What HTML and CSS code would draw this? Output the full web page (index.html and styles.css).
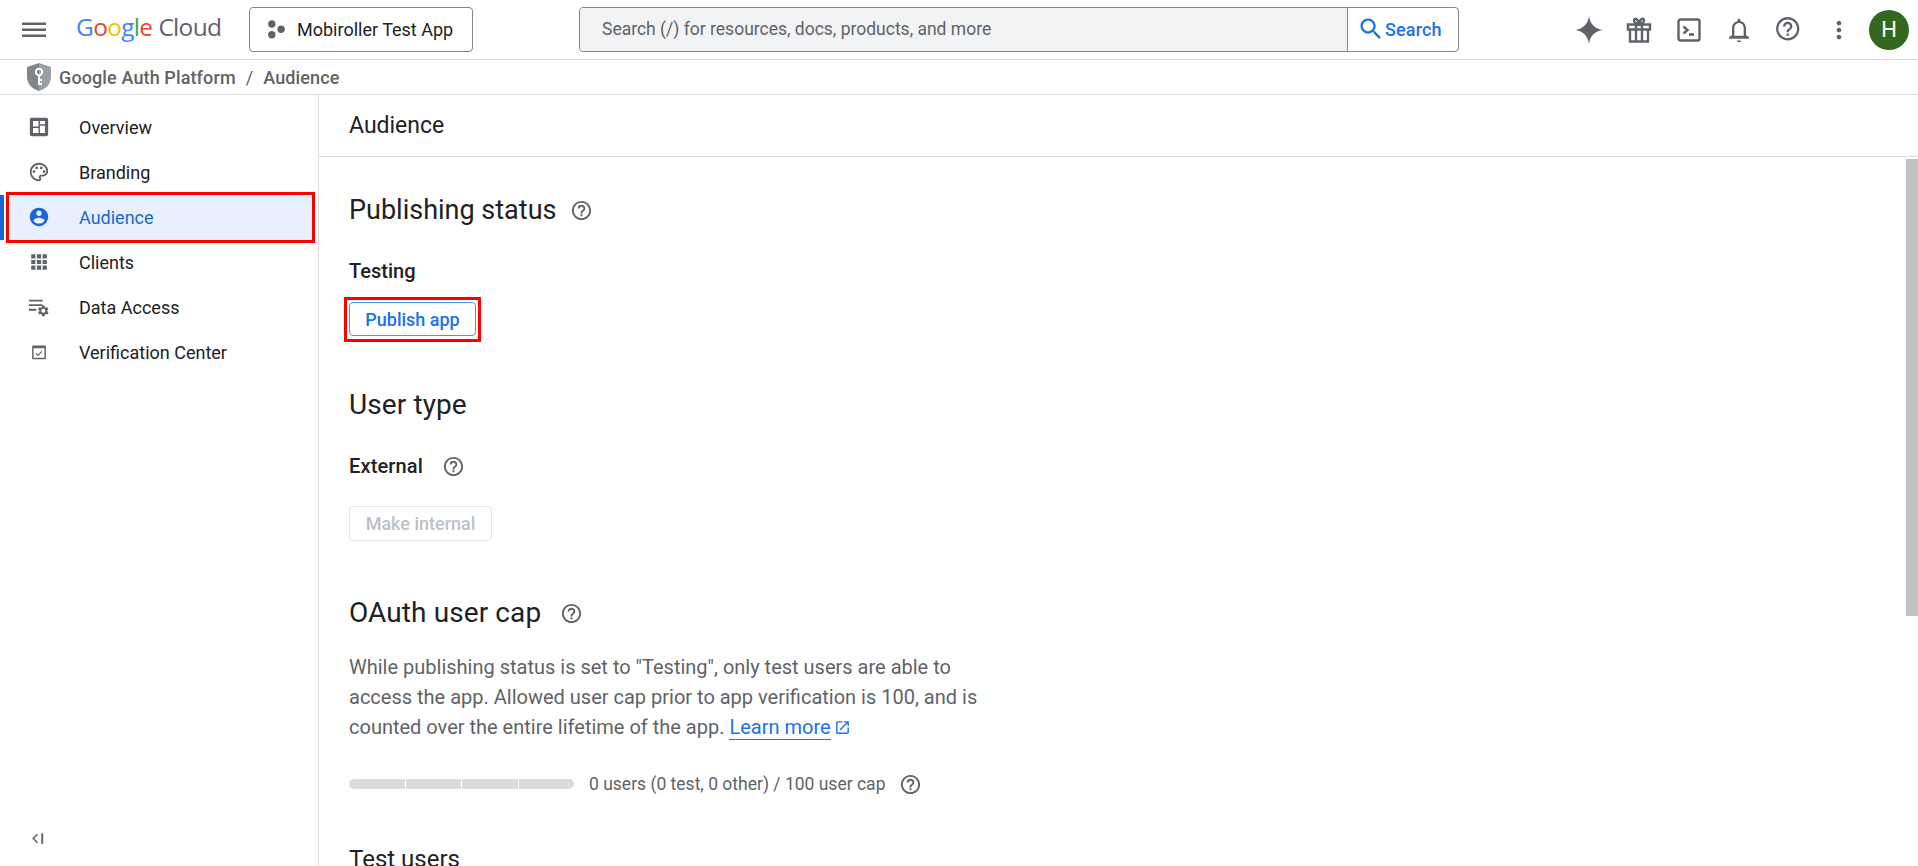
FILE: index.html
```html
<!DOCTYPE html>
<html lang="en">
<head>
<meta charset="utf-8">
<title>Audience</title>
<link rel="stylesheet" href="styles.css">
</head>
<body>
<svg class="defs" width="0" height="0"><defs>
<symbol id="help" viewBox="0 0 24 24"><path d="M11 18h2v-2h-2v2zm1-16C6.48 2 2 6.48 2 12s4.48 10 10 10 10-4.48 10-10S17.52 2 12 2zm0 18c-4.41 0-8-3.59-8-8s3.59-8 8-8 8 3.59 8 8-3.59 8-8 8zm0-14c-2.21 0-4 1.79-4 4h2c0-1.1.9-2 2-2s2 .9 2 2c0 2-3 1.75-3 5h2c0-2.25 3-2.5 3-5 0-2.21-1.79-4-4-4z"/></symbol>
</defs></svg>
<header class="topbar">
  <svg class="menu-icon" viewBox="0 0 24 24"><path d="M0 19h24v-2.4H0V19zm0-6h24v-2.4H0V13zm0-8.4V7h24V4.6H0z"/></svg>
  <div class="logo"><span class="g-blue">G</span><span class="g-red">o</span><span class="g-yellow">o</span><span class="g-blue">g</span><span class="g-green">l</span><span class="g-red">e</span><span class="logo-cloud">Cloud</span></div>
  <button class="project">
    <svg class="project-icon" viewBox="0 0 18 18"><circle cx="5.5" cy="3.8" r="3.5"/><circle cx="14.300" cy="8.800" r="3.500"/><circle cx="5.5" cy="14" r="3.5"/></svg>
    <span>Mobiroller Test App</span>
  </button>
  <div class="search">
    <div class="search-field">Search (/) for resources, docs, products, and more</div>
    <div class="search-btn">
      <svg class="search-icon" viewBox="0 0 24 24"><path d="M15.5 14h-.79l-.28-.27C15.41 12.59 16 11.11 16 9.5 16 5.91 13.09 3 9.5 3S3 5.91 3 9.5 5.91 16 9.5 16c1.61 0 3.09-.59 4.23-1.57l.27.28v.79l5 4.99L20.49 19l-4.99-5zm-6 0C7.01 14 5 11.99 5 9.5S7.01 5 9.5 5 14 7.01 14 9.5 11.99 14 9.5 14z"/></svg>
      <span>Search</span>
    </div>
  </div>
  <div class="actions">
    <svg class="act" viewBox="1 1 26 26"><path d="M14 1c1 7.500 5.500 12 13 13-7.500 1-12 5.500-13 13-1-7.500-5.500-12-13-13 7.500-1 12-5.500 13-13z"/></svg>
    <svg class="act" viewBox="0 0 28 28"><path class="st" d="M3 8.500h22v5H3zM5 13.500v12h18v-12M11 8.500v17M17 8.500v17M14 8.500c-2-1-5-1.500-5-4 0-3 4-2.500 5 4zM14 8.500c2-1 5-1.500 5-4 0-3-4-2.500-5 4z"/></svg>
    <svg class="act" viewBox="0 0 28 28"><rect class="st" x="3.500" y="3.500" width="21" height="21" rx="2"/><path class="st" d="M8.500 10.500l4 3.500-4 3.500M14 18.500h5"/></svg>
    <svg class="act" viewBox="0 0 24 24"><path d="M12 22.500c1.100 0 2-.6 2-1.500h-4c0 .9.900 1.500 2 1.500zM18 16.500v-6c0-3-1.600-5.400-4.800-6.200V3.600c0-.7-.5-1.200-1.200-1.200s-1.200.5-1.200 1.200v.7C7.600 5.100 6 7.500 6 10.500v6L3.500 18v1.500h17V18L18 16.500zM16 17H8v-6.500c0-2.500 1.500-4.500 4-4.500s4 2 4 4.500V17z"/></svg>
    <svg class="act" viewBox="1 1 22 22"><use href="#help"/></svg>
    <svg class="act" viewBox="0 0 24 24"><path d="M12 8c1.100 0 2-.9 2-2s-.9-2-2-2-2 .9-2 2 .9 2 2 2zm0 2c-1.100 0-2 .9-2 2s.9 2 2 2 2-.9 2-2-.9-2-2-2zm0 6c-1.100 0-2 .9-2 2s.9 2 2 2 2-.9 2-2-.9-2-2-2z"/></svg>
    <div class="avatar">H</div>
  </div>
</header>
<div class="crumbs">
  <svg class="shield" viewBox="0 0 24 28"><defs><linearGradient id="sh" x1="0" x2="1" y1="0" y2="0"><stop offset=".5" stop-color="#80868b"/><stop offset=".5" stop-color="#9aa0a6"/></linearGradient></defs><path fill="url(#sh)" d="M12 0l12 4v10c0 7-5 12-12 14C5 26 0 21 0 14V4z"/><circle cx="12" cy="9" r="3.200" fill="none" stroke="#fff" stroke-width="2"/><path d="M12 12v10M12 17h3M12 21h3" stroke="#fff" stroke-width="2" fill="none"/></svg>
  <span class="crumb">Google Auth Platform</span>
  <span class="crumb-sep">/</span>
  <span class="crumb">Audience</span>
</div>
<div class="shell">
  <nav class="sidebar">
    <ul class="nav">
      <li class="nav-item"><a class="nav-link"><svg class="nav-icon" viewBox="0 0 24 24"><path fill-rule="evenodd" d="M4 2h16c1.100 0 2 .9 2 2v16c0 1.100-.9 2-2 2H4c-1.100 0-2-.9-2-2V4c0-1.100.9-2 2-2zM5.500 5.500v6h6v-6h-6zm7.500 0v3.500h5.500V5.500H13zm0 5v8h5.500v-8H13zm-7.500 2.500v5.500h6V13h-6z"/></svg>Overview</a></li>
      <li class="nav-item"><a class="nav-link"><svg class="nav-icon" viewBox="0 0 24 24"><path d="M12 22C6.490 22 2 17.510 2 12S6.490 2 12 2s10 4.040 10 9c0 3.310-2.690 6-6 6h-1.770c-.28 0-.5.220-.5.500 0 .120.050.230.130.330.410.470.640 1.060.640 1.670 0 1.380-1.120 2.500-2.500 2.500zm0-18c-4.410 0-8 3.590-8 8s3.590 8 8 8c.28 0 .5-.220.500-.5 0-.160-.080-.280-.140-.350-.410-.460-.630-1.050-.630-1.650 0-1.380 1.120-2.500 2.500-2.500H16c2.210 0 4-1.790 4-4 0-3.860-3.590-7-8-7z"/><circle cx="6.500" cy="11.500" r="1.500"/><circle cx="9.500" cy="7.500" r="1.500"/><circle cx="14.500" cy="7.500" r="1.500"/><circle cx="17.500" cy="11.500" r="1.500"/></svg>Branding</a></li>
      <li class="nav-item is-active"><a class="nav-link"><svg class="nav-icon" viewBox="0 0 24 24"><path d="M12 2C6.480 2 2 6.480 2 12s4.480 10 10 10 10-4.480 10-10S17.520 2 12 2zm0 3c1.660 0 3 1.340 3 3s-1.340 3-3 3-3-1.340-3-3 1.340-3 3-3zm0 14.200c-2.500 0-4.710-1.280-6-3.220.030-1.990 4-3.080 6-3.080 1.990 0 5.970 1.090 6 3.080-1.290 1.940-3.500 3.220-6 3.220z"/></svg>Audience</a></li>
      <li class="nav-item"><a class="nav-link"><svg class="nav-icon" viewBox="0 0 24 24"><path d="M3.500 3.500h4.600v4.600H3.500zM9.700 3.500h4.600v4.600H9.700zM15.900 3.500h4.600v4.600h-4.600zM3.500 9.700h4.600v4.600H3.500zM9.700 9.700h4.600v4.600H9.700zM15.900 9.700h4.600v4.600h-4.600zM3.500 15.900h4.600v4.600H3.500zM9.700 15.900h4.600v4.600H9.700zM15.900 15.900h4.600v4.600h-4.600z"/></svg>Clients</a></li>
      <li class="nav-item"><a class="nav-link"><svg class="nav-icon" viewBox="0 0 24 24"><path d="M1 4h15v2H1zM1 9h15v2H1zM1 14h8v2H1z"/><path transform="translate(9.500 9) scale(.6)" d="M19.140 12.940c.040-.3.060-.610.060-.940 0-.320-.020-.640-.070-.940l2.030-1.580c.180-.140.230-.410.120-.610l-1.920-3.320c-.120-.220-.370-.290-.590-.220l-2.390.960c-.5-.380-1.030-.7-1.620-.94l-.360-2.540c-.040-.240-.240-.410-.480-.410h-3.840c-.240 0-.430.170-.470.410l-.360 2.540c-.590.240-1.130.570-1.620.94l-2.390-.96c-.220-.080-.470 0-.590.220L2.740 8.870c-.120.210-.080.470.120.610l2.030 1.580c-.050.3-.090.630-.090.940s.020.640.070.940l-2.030 1.580c-.180.140-.230.410-.120.610l1.920 3.320c.120.220.370.290.590.220l2.390-.96c.5.380 1.030.7 1.620.94l.360 2.540c.050.240.240.410.480.410h3.840c.240 0 .440-.17.470-.41l.360-2.540c.590-.240 1.130-.560 1.620-.94l2.390.96c.220.080.470 0 .590-.22l1.920-3.320c.120-.220.070-.47-.12-.61l-2.010-1.580zM12 15.600c-1.980 0-3.600-1.620-3.600-3.600s1.620-3.600 3.600-3.600 3.600 1.620 3.600 3.600-1.620 3.600-3.600 3.600z"/></svg>Data Access</a></li>
      <li class="nav-item"><a class="nav-link"><svg class="nav-icon" viewBox="0 0 24 24"><path fill-rule="evenodd" d="M5.500 5h13c.6 0 1 .4 1 1v13c0 .6-.4 1-1 1h-13c-.6 0-1-.4-1-1V6c0-.6.4-1 1-1zm.6 3v10.400h11.800V8H6.100z"/><path d="M10.800 16.500l-2.600-2.600.9-.9 1.700 1.700 3.900-3.900.9.900z"/></svg>Verification Center</a></li>
    </ul>
    <svg class="collapse" viewBox="0 0 14 14"><path d="M6.500 2.500L2 7l4.500 4.500 1-1L4 7l3.500-3.500zM10.500 2h1.800v10h-1.800z"/></svg>
  </nav>
  <main class="main">
    <div class="page-head">Audience</div>
    <div class="body-row">
      <div class="content">
        <section class="first">
          <h2 class="h2 h2-tight">Publishing status<svg class="help" viewBox="0 0 24 24"><use href="#help"/></svg></h2>
          <div class="label label-testing">Testing</div>
          <div class="annot"><button class="btn btn-primary">Publish app</button></div>
        </section>
        <section class="block-user">
          <h2 class="h2">User type</h2>
          <div class="label label-ext">External<svg class="help" viewBox="0 0 24 24"><use href="#help"/></svg></div>
          <button class="btn btn-disabled">Make internal</button>
        </section>
        <section class="block-cap">
          <h2 class="h2">OAuth user cap<svg class="help" viewBox="0 0 24 24"><use href="#help"/></svg></h2>
          <p class="desc">While publishing status is set to "Testing", only test users are able to access the app. Allowed user cap prior to app verification is 100, and is counted over the entire lifetime of the app. <a class="link">Learn more</a><svg class="ext" viewBox="0 0 24 24"><path d="M19 19H5V5h7V3H5c-1.110 0-2 .9-2 2v14c0 1.100.890 2 2 2h14c1.100 0 2-.9 2-2v-7h-2v7zM14 3v2h3.590l-9.830 9.830 1.410 1.410L19 6.410V10h2V3h-7z"/></svg></p>
          <div class="cap-row">
            <div class="cap-bar"><i></i><i></i><i></i><i></i></div>
            <span class="cap-text">0 users (0 test, 0 other) / 100 user cap</span>
            <svg class="help" viewBox="0 0 24 24"><use href="#help"/></svg>
          </div>
        </section>
        <section class="block-test">
          <h2 class="h2 h2-small">Test users</h2>
        </section>
      </div>
      <div class="scrolltrack"><div class="scrollthumb"></div></div>
    </div>
  </main>
</div>
</body>
</html>
```
FILE: styles.css
```css
* { box-sizing: border-box; }
html, body { margin: 0; height: 100%; overflow: hidden; }
body { display: flex; flex-direction: column; background: #fff; font-family: Roboto, "Liberation Sans", sans-serif; color: #202124; }
.defs { position: absolute; }
.topbar { height: 60px; flex: none; display: flex; align-items: center; border-bottom: 1px solid #dadce0; }
.menu-icon { width: 24px; height: 24px; margin-left: 22px; fill: #5f6368; flex: none; }
.logo { width: 173px; margin-left: 30px; flex: none; font-family: "Open Sans", sans-serif; font-size: 24.5px; letter-spacing: -.7px; line-height: 1; margin-top: -4px; white-space: nowrap; }
.g-blue { color: #4285f4; } .g-red { color: #ea4335; } .g-yellow { color: #fbbc04; } .g-green { color: #34a853; }
.logo-cloud { color: #5f6368; margin-left: 6px; }
.project { width: 224px; flex: none; height: 45px; display: flex; align-items: center; background: #fff; border: 1px solid #80868b; border-radius: 4px; font: 400 18px Roboto, sans-serif; color: #202124; padding: 0 0 0 16px; margin-top: -1px; }
.project-icon { width: 19px; height: 19px; fill: #5f6368; margin-right: 12px; flex: none; }
.search { margin-left: 106px; width: 880px; flex: none; height: 45px; display: flex; border: 1px solid #80868b; border-radius: 4px; margin-top: -1px; overflow: hidden; }
.search-field { flex: 1; background: #f1f3f4; color: #5f6368; font-size: 17.5px; display: flex; align-items: center; padding-left: 22px; border-right: 1px solid #80868b; }
.search-btn { width: 110px; display: flex; align-items: center; padding-left: 9px; color: #1a73e8; font-size: 18px; font-weight: 500; letter-spacing: .15px; }
.search-icon { width: 28px; height: 28px; fill: #1a73e8; flex: none; }
.actions { display: flex; align-items: center; margin-left: 116px; }
.act { width: 28px; height: 28px; fill: #5f6368; margin-right: 22px; flex: none; }
.st { fill: none; stroke: #5f6368; stroke-width: 2.4; }
.avatar { width: 40px; height: 40px; border-radius: 50%; background: #33691e; color: #fff; display: flex; align-items: center; justify-content: center; font-size: 22px; margin-left: -6px; flex: none; }
.crumbs { height: 35px; flex: none; display: flex; align-items: center; padding-left: 27px; border-bottom: 1px solid #dadce0; font-size: 18px; color: #5f6368; font-weight: 500; letter-spacing: .12px; }
.shield { width: 24px; height: 28px; margin-right: 8px; }
.crumb-sep { margin: 0 10px; font-weight: 400; }
.shell { flex: 1; display: flex; min-height: 0; }
.sidebar { width: 319px; flex: none; border-right: 1px solid #dadce0; display: flex; flex-direction: column; padding-top: 10px; }
.nav { list-style: none; margin: 0; padding: 0; }
.nav-item { height: 45px; border-left: 4px solid transparent; display: flex; }
.nav-link { flex: 1; margin: 0 6px 0 5px; display: flex; align-items: center; padding-left: 70px; position: relative; font-size: 18px; color: #202124; }
.nav-icon { position: absolute; left: 19px; top: 11px; width: 22px; height: 22px; fill: #5f6368; }
.is-active { border-left-color: #1967d2; }
.is-active .nav-link { background: #e8f0fe; color: #1967d2; outline: 3px solid #f00; }
.is-active .nav-icon { fill: #1967d2; }
.collapse { width: 15px; height: 15px; margin: auto 0 20px 30px; fill: #5f6368; flex: none; }
.main { flex: 1; min-width: 0; display: flex; flex-direction: column; }
.page-head { height: 62px; flex: none; padding-left: 30px; display: flex; align-items: center; font-size: 23px; border-bottom: 1px solid #dadce0; }
.body-row { flex: 1; display: flex; min-height: 0; }
.content { flex: 1; min-width: 0; padding-left: 30px; overflow: hidden; }
.scrolltrack { width: 12px; flex: none; padding-top: 2px; }
.scrollthumb { height: 457px; background: #c1c1c1; }
.first { padding-top: 35px; }
.h2 { margin: 0; font-size: 28px; font-weight: 400; line-height: 36px; display: flex; align-items: center; letter-spacing: .1px; }
.h2-tight { font-size: 27px; letter-spacing: 0; }
.h2-small { font-size: 24px; letter-spacing: 0; }
.help { width: 23px; height: 23px; fill: #5f6368; margin-left: 19px; flex: none; }
.h2-tight .help { margin-left: 14px; }
.label { font-weight: 500; font-size: 20px; line-height: 24px; display: flex; align-items: center; }
.label-testing { margin-top: 31px; }
.label-ext { margin-top: 31px; letter-spacing: .15px; }
.annot { width: fit-content; margin: 14px 0 0 -5px; border: 3px solid #f00; padding: 2px 2px 3px; }
.btn { display: block; font: 500 18px Roboto, sans-serif; border-radius: 4px; background: #fff; padding: 0; }
.btn-primary { width: 127px; height: 34px; color: #1a73e8; border: 1px solid #4f8fed; }
.btn-disabled { margin-top: 28px; width: 143px; height: 35px; color: #bdc1c6; border: 1px solid #e3e5e8; }
.block-user { margin-top: 45px; }
.block-cap { margin-top: 54px; }
.desc { margin: 21px 0 0; width: 640px; font-size: 20px; line-height: 30px; color: #5f6368; }
.link { color: #1a73e8; border-bottom: 1px solid #1a73e8; }
.ext { width: 17px; height: 17px; fill: #1a73e8; margin-left: 3px; vertical-align: -2px; }
.cap-row { display: flex; align-items: center; margin-top: 30px; font-size: 17.5px; color: #5f6368; height: 24px; }
.cap-bar { width: 225px; height: 10px; display: flex; gap: 1px; border-radius: 5px; overflow: hidden; flex: none; }
.cap-bar i { flex: 1; background: #dadce0; }
.cap-row .help { margin-left: 14px; }
.cap-text { margin-left: 15px; }
.block-test { margin-top: 45px; }
```
